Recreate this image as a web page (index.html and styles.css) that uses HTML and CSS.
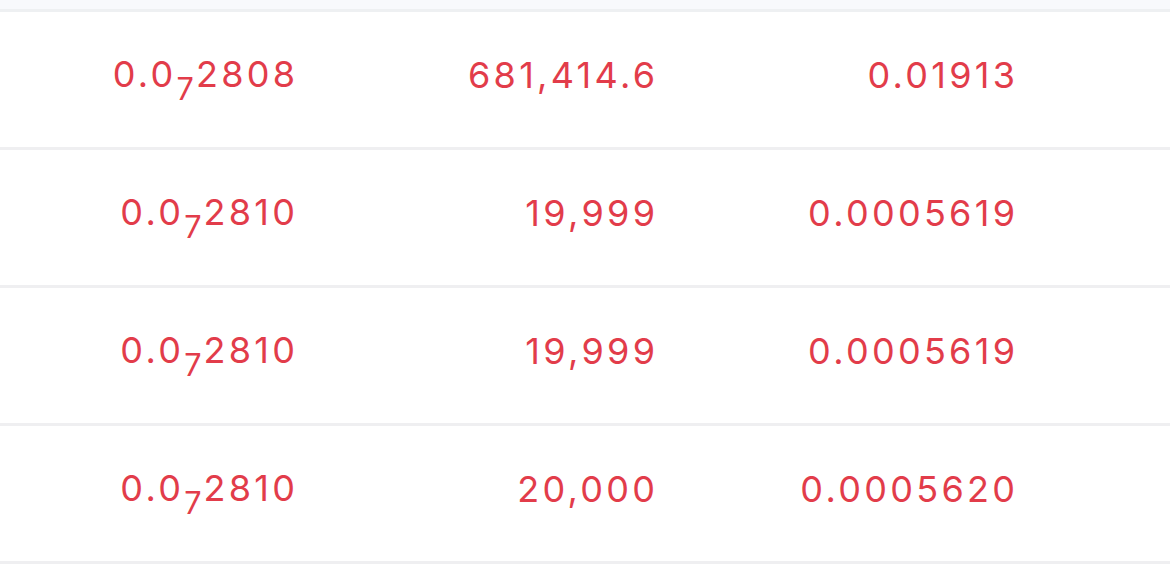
FILE: index.html
```html
<!DOCTYPE html>
<html>
<head>
<meta charset="utf-8">
<link rel="stylesheet" href="styles.css">
</head>
<body>
<div class="top"></div>
<div class="list">
  <div class="row">
    <div class="cell">0.0<span class="sub">7</span>2808</div>
    <div class="cell">681,414.6</div>
    <div class="cell">0.01913</div>
  </div>
  <div class="row">
    <div class="cell">0.0<span class="sub">7</span>2810</div>
    <div class="cell">19,999</div>
    <div class="cell">0.0005619</div>
  </div>
  <div class="row">
    <div class="cell">0.0<span class="sub">7</span>2810</div>
    <div class="cell">19,999</div>
    <div class="cell">0.0005619</div>
  </div>
  <div class="row">
    <div class="cell">0.0<span class="sub">7</span>2810</div>
    <div class="cell">20,000</div>
    <div class="cell">0.0005620</div>
  </div>
</div>
</body>
</html>
```

FILE: styles.css
```css
html, body {
  margin: 0;
  padding: 0;
  background: #ffffff;
}
body {
  font-family: Inter, "Noto Sans", sans-serif;
  width: 1170px;
  height: 579px;
  overflow: hidden;
}
.top {
  height: 9px;
  background: #f8f9fc;
  border-bottom: 3px solid #eef0f2;
}
.row {
  display: grid;
  grid-template-columns: 295px 360px 360px;
  height: 135px;
  border-bottom: 3px solid #efeff1;
  align-items: center;
}
.cell {
  text-align: right;
  color: #e23c4a;
  font-size: 36px;
  line-height: 40px;
  font-weight: 400;
  letter-spacing: 3.3px;
  margin-right: -3.3px;
  margin-bottom: 9px;
}
.sub {
  font-size: 0.85em;
  position: relative;
  top: 0.42em;
  letter-spacing: 2px;
}
```
